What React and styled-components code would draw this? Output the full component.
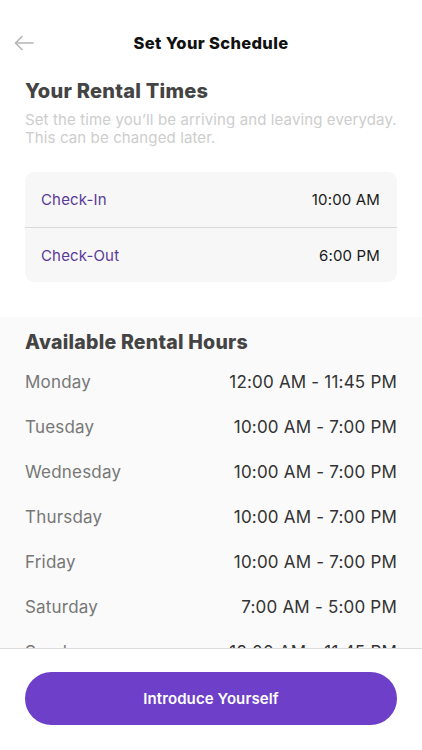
import React from "react";
import styled, { createGlobalStyle } from "styled-components";

const Global = createGlobalStyle`
  html, body { margin: 0; padding: 0; background: #fff; }
  body { font-family: Inter, "Noto Sans", "Liberation Sans", sans-serif; -webkit-font-smoothing: antialiased; }
  * { box-sizing: border-box; }
`;

const Page = styled.div`
  height: 750px;
  width: 422px;
  display: flex;
  flex-direction: column;
  overflow: hidden;
  background: #fff;
`;

const Header = styled.header`
  margin-top: 24px;
  height: 38px;
  display: grid;
  grid-template-columns: 60px 1fr 60px;
  align-items: center;
`;

const BackButton = styled.button`
  border: 0;
  background: none;
  padding: 0 0 0 14px;
  display: flex;
  align-items: center;
  color: #b5b5b5;
  cursor: pointer;
`;

const Title = styled.h1`
  margin: 0;
  text-align: center;
  font-size: 16.5px;
  font-weight: 800;
  color: #111;
  letter-spacing: 0.35px;
`;

const Scroll = styled.main`
  flex: 1;
  overflow: hidden;
`;

const Intro = styled.section`
  padding: 17px 25px 35px;
`;

const Heading = styled.h2`
  margin: 0;
  font-size: 20px;
  line-height: 24px;
  font-weight: 800;
  color: #444;
  letter-spacing: 0.25px;
`;

const Sub = styled.p`
  margin: 8px 0 0;
  font-size: 15px;
  line-height: 17.5px;
  color: #cdcdcd;
  letter-spacing: 0.12px;
`;

const Card = styled.div`
  margin-top: 26px;
  background: #f7f7f7;
  border-radius: 9px;
  overflow: hidden;
`;

const CardRow = styled.div`
  height: 55px;
  display: flex;
  align-items: center;
  justify-content: space-between;
  padding: 0 17px 0 16px;
  font-size: 15px;
  letter-spacing: 0.15px;
  border-top: ${(p) => (p.$divider ? "1px solid #d9d9d9" : "none")};
`;

const Label = styled.span`
  color: #5a3a99;
`;

const Value = styled.span`
  color: #1a1a1a;
`;

const Hours = styled.section`
  background: #fafafa;
  padding: 13px 25px 0;
`;

const HoursHeading = styled(Heading)`
  font-size: 19.5px;
  margin-bottom: 5.5px;
`;

const DayRow = styled.div`
  height: 45px;
  display: flex;
  align-items: center;
  justify-content: space-between;
  font-size: 17px;
  letter-spacing: 0.2px;
`;

const Day = styled.span`
  color: #777;
`;

const Range = styled.span`
  color: #333;
`;

const Footer = styled.footer`
  border-top: 1px solid #dcdcdc;
  padding: 23px 25px 25px;
  background: #fff;
`;

const PrimaryButton = styled.button`
  width: 100%;
  height: 53px;
  border: 0;
  border-radius: 27px;
  background: #6e3fc8;
  color: #fff;
  font-family: inherit;
  font-size: 15px;
  font-weight: 600;
  letter-spacing: 0.1px;
  cursor: pointer;
`;

const days = [
  ["Monday", "12:00 AM - 11:45 PM"],
  ["Tuesday", "10:00 AM - 7:00 PM"],
  ["Wednesday", "10:00 AM - 7:00 PM"],
  ["Thursday", "10:00 AM - 7:00 PM"],
  ["Friday", "10:00 AM - 7:00 PM"],
  ["Saturday", "7:00 AM - 5:00 PM"],
  ["Sunday", "12:00 AM - 11:45 PM"],
];

export default function App() {
  return (
    <>
      <Global />
      <Page>
        <Header>
          <BackButton aria-label="Back">
            <svg width="20" height="16" viewBox="0 0 20 16" fill="none" stroke="currentColor" strokeWidth="1.6" strokeLinecap="round" strokeLinejoin="round">
              <path d="M19 8H2" />
              <path d="M8 1.5L1.5 8L8 14.5" />
            </svg>
          </BackButton>
          <Title>Set Your Schedule</Title>
          <span />
        </Header>
        <Scroll>
          <Intro>
            <Heading>Your Rental Times</Heading>
            <Sub>
              Set the time you’ll be arriving and leaving everyday.
              <br />
              This can be changed later.
            </Sub>
            <Card>
              <CardRow>
                <Label>Check-In</Label>
                <Value>10:00 AM</Value>
              </CardRow>
              <CardRow $divider>
                <Label>Check-Out</Label>
                <Value>6:00 PM</Value>
              </CardRow>
            </Card>
          </Intro>
          <Hours>
            <HoursHeading>Available Rental Hours</HoursHeading>
            {days.map(([d, r]) => (
              <DayRow key={d}>
                <Day>{d}</Day>
                <Range>{r}</Range>
              </DayRow>
            ))}
          </Hours>
        </Scroll>
        <Footer>
          <PrimaryButton>Introduce Yourself</PrimaryButton>
        </Footer>
      </Page>
    </>
  );
}
